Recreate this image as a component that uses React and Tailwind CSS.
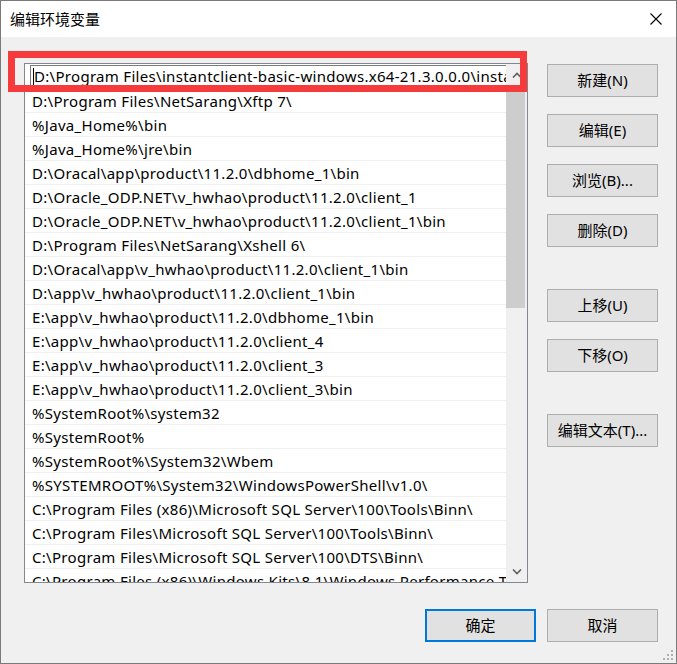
import React from "react";

const rows = [
  "D:\\Program Files\\NetSarang\\Xftp 7\\",
  "%Java_Home%\\bin",
  "%Java_Home%\\jre\\bin",
  "D:\\Oracal\\app\\product\\11.2.0\\dbhome_1\\bin",
  "D:\\Oracle_ODP.NET\\v_hwhao\\product\\11.2.0\\client_1",
  "D:\\Oracle_ODP.NET\\v_hwhao\\product\\11.2.0\\client_1\\bin",
  "D:\\Program Files\\NetSarang\\Xshell 6\\",
  "D:\\Oracal\\app\\v_hwhao\\product\\11.2.0\\client_1\\bin",
  "D:\\app\\v_hwhao\\product\\11.2.0\\client_1\\bin",
  "E:\\app\\v_hwhao\\product\\11.2.0\\dbhome_1\\bin",
  "E:\\app\\v_hwhao\\product\\11.2.0\\client_4",
  "E:\\app\\v_hwhao\\product\\11.2.0\\client_3",
  "E:\\app\\v_hwhao\\product\\11.2.0\\client_3\\bin",
  "%SystemRoot%\\system32",
  "%SystemRoot%",
  "%SystemRoot%\\System32\\Wbem",
  "%SYSTEMROOT%\\System32\\WindowsPowerShell\\v1.0\\",
  "C:\\Program Files (x86)\\Microsoft SQL Server\\100\\Tools\\Binn\\",
  "C:\\Program Files\\Microsoft SQL Server\\100\\Tools\\Binn\\",
  "C:\\Program Files\\Microsoft SQL Server\\100\\DTS\\Binn\\",
  "C:\\Program Files (x86)\\Windows Kits\\8.1\\Windows Performance Toolkit\\",
];

const font = { fontFamily: '"Noto Sans", "Noto Sans CJK SC", sans-serif' };

function Btn({ children, primary }) {
  return (
    <div
      className={
        primary
          ? "w-[111px] h-[33px] flex items-center justify-center bg-[#e1e1e1] border-2 border-[#0078d7] text-[15px] text-black"
          : "w-[111px] h-[33px] flex items-center justify-center bg-[#e1e1e1] border border-[#adadad] text-[15px] text-black"
      }
    >
      {children}
    </div>
  );
}

export default function App() {
  return (
    <div
      className="relative w-[677px] h-[664px] border border-[#7a7a7a] flex flex-col bg-[#f0f0f0] overflow-hidden"
      style={font}
    >
      {/* Title bar */}
      <div className="h-[36px] bg-white flex items-center justify-between pl-[9px] pr-[14px]">
        <span className="text-[15px] text-black leading-none">编辑环境变量</span>
        <svg width="12" height="12" viewBox="0 0 12 12" className="block">
          <path d="M0.5 0.5 L11.5 11.5 M11.5 0.5 L0.5 11.5" stroke="#000" strokeWidth="1.1" fill="none" />
        </svg>
      </div>

      {/* Body */}
      <div className="flex-1 flex flex-col pt-[26px] pl-[23px] pr-[18px]">
        <div className="flex gap-[19px]">
          {/* List */}
          <div className="w-[504px] h-[520px] border border-[#828790] bg-white flex">
            <div className="w-[481px] h-full overflow-hidden flex flex-col">
              {/* Edit row */}
              <div className="h-[24px] shrink-0 pl-[5px] pt-[1px]">
                <div className="h-[23px] border border-[#7a7a7a] border-r-0 flex items-center pl-[2px] overflow-hidden whitespace-nowrap">
                  <span className="w-[1px] h-[18px] bg-black shrink-0"></span>
                  <span className="text-[15px] tracking-[0.3px] text-black leading-none">
                    D:\Program Files\instantclient-basic-windows.x64-21.3.0.0.0\instantclient_21_3
                  </span>
                </div>
              </div>
              {rows.map((r, i) => (
                <div
                  key={i}
                  className="h-[24px] shrink-0 border-t border-[#f0f0f0] pl-[7px] pt-[1px] flex items-center whitespace-nowrap text-[15px] tracking-[0.3px] text-black leading-none"
                >
                  {r}
                </div>
              ))}
            </div>
            {/* Scrollbar */}
            <div className="w-[21px] h-full bg-[#f0f0f0] flex flex-col">
              <div className="h-[21px] shrink-0 flex items-center justify-center">
                <svg width="10" height="6" viewBox="0 0 10 6">
                  <path d="M1 5.5 L5 1.5 L9 5.5" stroke="#606060" strokeWidth="1.6" fill="none" />
                </svg>
              </div>
              <div className="h-[222px] w-[19px] bg-[#cdcdcd] mt-[1px]"></div>
              <div className="flex-1"></div>
              <div className="h-[21px] shrink-0 flex items-center justify-center">
                <svg width="10" height="6" viewBox="0 0 10 6">
                  <path d="M1 0.5 L5 4.5 L9 0.5" stroke="#606060" strokeWidth="1.6" fill="none" />
                </svg>
              </div>
            </div>
          </div>

          {/* Buttons column */}
          <div className="flex flex-col mt-[1px]">
            <Btn>新建(N)</Btn>
            <div className="h-[17px]"></div>
            <Btn>编辑(E)</Btn>
            <div className="h-[17px]"></div>
            <Btn>浏览(B)...</Btn>
            <div className="h-[17px]"></div>
            <Btn>删除(D)</Btn>
            <div className="h-[42px]"></div>
            <Btn>上移(U)</Btn>
            <div className="h-[17px]"></div>
            <Btn>下移(O)</Btn>
            <div className="h-[42px]"></div>
            <Btn>编辑文本(T)...</Btn>
          </div>
        </div>

        <div className="flex justify-end gap-[11px] mt-[26px]">
          <Btn primary>确定</Btn>
          <Btn>取消</Btn>
        </div>
      </div>

      {/* Resize grip */}
      <svg width="14" height="14" viewBox="0 0 14 14" className="absolute right-[1px] bottom-[1px]">
        <rect x="10" y="2" width="2" height="2" fill="#b0b0b0" />
        <rect x="6" y="6" width="2" height="2" fill="#b0b0b0" />
        <rect x="10" y="6" width="2" height="2" fill="#b0b0b0" />
        <rect x="2" y="10" width="2" height="2" fill="#b0b0b0" />
        <rect x="6" y="10" width="2" height="2" fill="#b0b0b0" />
        <rect x="10" y="10" width="2" height="2" fill="#b0b0b0" />
      </svg>

      {/* Red highlight annotation */}
      <div className="absolute left-[7px] top-[50px] w-[519px] h-[41px] border-[7px] border-[#f53b3b] pointer-events-none"></div>
    </div>
  );
}
